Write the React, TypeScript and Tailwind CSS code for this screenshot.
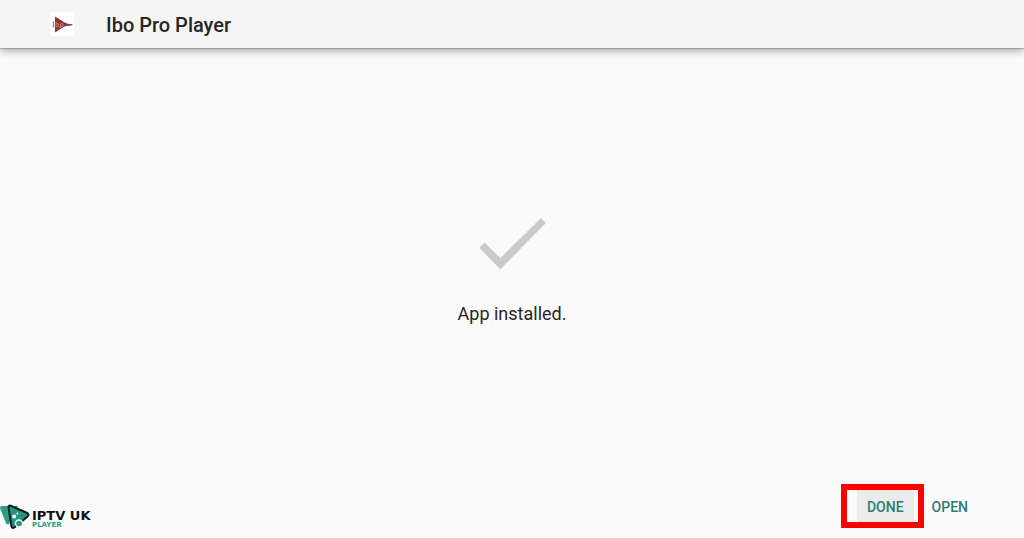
function AppIcon() {
  return (
    <svg viewBox="0 0 24 24" className="size-6 bg-white" aria-hidden="true">
      <path d="M5 5 L17 12.3 L5 20 Z" fill="#a02c2a" />
      <path d="M5 5 L17 12.3 L5 20" fill="none" stroke="#74302f" strokeWidth="0.8" />
      <path d="M12 11 L22.5 12.2 V13.2 L13 14.4 Z" fill="#5a4a4b" />
      <path d="M3.5 9.5 V15.5" stroke="#9c8584" strokeWidth="1.4" />
      <path d="M6 9.5 V14.6 H8.5 V11.8 H6" fill="none" stroke="#d39a97" strokeWidth="0.7" />
      <path d="M10.5 16 V11.8 H13 V14.4 H10.5" fill="none" stroke="#d39a97" strokeWidth="0.7" />
    </svg>
  );
}

function CheckMark() {
  return (
    <svg viewBox="0 0 68 52" className="h-[52px] w-[68px]" aria-hidden="true">
      <path d="M1.3 29.8 L6.5 24.6 L22.3 40 L63 0 L68 5 L22.3 51.2 Z" fill="#c9cbca" />
    </svg>
  );
}

function BrandLogo() {
  return (
    <div className="flex items-end gap-0.5">
      <svg viewBox="0 0 30 26" className="h-[26px] w-[30px]" aria-hidden="true">
        <path d="M1.5 2 H18 L9 20 Q7.5 21.5 6 19 L0.5 5.5 Q-0.5 2.5 1.5 2 Z" fill="#2a9d87" />
        <path
          d="M8.5 3.2 Q8.4 1.2 10.6 1.7 L27.3 9 Q29.6 10.4 27.6 12.4 L14.4 23.4 Q12.2 24.8 11.4 22.2 Z"
          fill="#219680"
          stroke="#111a19"
          strokeWidth="2"
          strokeLinejoin="round"
        />
        <circle cx="14.2" cy="12.6" r="2" fill="#f4fffc" />
        <circle cx="17.4" cy="9.4" r="1" fill="#f4fffc" />
        <circle cx="19" cy="19.5" r="4.2" fill="#fafafa" />
        <circle cx="19" cy="19.5" r="2.8" fill="#219680" />
      </svg>
      <div className="pb-px font-['DejaVu_Sans',sans-serif] font-bold">
        <div className="text-[13px] leading-[13px] text-[#111111]">IPTV UK</div>
        <div className="text-[7px] leading-[7px] text-[#2a9d87]">PLAYER</div>
      </div>
    </div>
  );
}

export default function App() {
  return (
    <div className="flex min-h-screen flex-col bg-[#fafafa] font-['Roboto',sans-serif] text-[#262626]">
      <header className="flex h-12 items-center gap-8 bg-[#f5f5f5] px-[50px] shadow-[0_1px_1px_rgba(0,0,0,0.2),0_3px_8px_rgba(0,0,0,0.3)]">
        <AppIcon />
        <h1 className="pt-0.5 text-[20px] leading-6 font-medium">Ibo Pro Player</h1>
      </header>

      <main className="flex grow flex-col items-center justify-center gap-8 pt-3">
        <CheckMark />
        <p className="text-[18px] leading-6">App installed.</p>
      </main>

      <footer className="flex items-end justify-between pr-12 pb-2">
        <BrandLogo />
        <div className="mb-0.5 flex items-center text-[14px] font-medium text-[#2b7d72]">
          <div className="border-6 border-[#fe0000] bg-[#fafafa] pr-1 pl-[10px]">
            <button type="button" className="h-8 bg-[#ebebeb] px-[10px] pt-0.5">
              DONE
            </button>
          </div>
          <button type="button" className="h-8 px-2 pt-0.5">
            OPEN
          </button>
        </div>
      </footer>
    </div>
  );
}
